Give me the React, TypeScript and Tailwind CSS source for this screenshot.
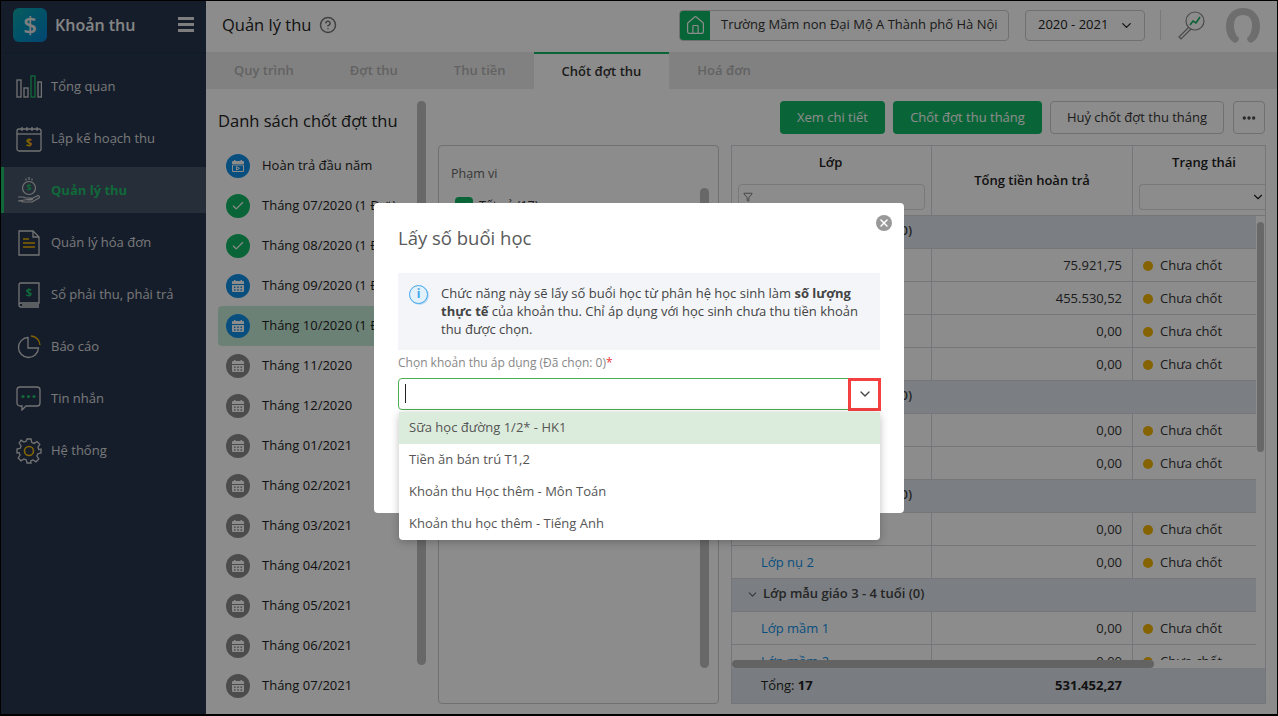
import { Check, ChevronDown, CircleHelp, Ellipsis, Filter, House, X } from "lucide-react";

const FONT = "font-['Open_Sans','Noto_Sans',sans-serif]";

function IconChart() {
  return (
    <svg width="26" height="24" viewBox="0 0 26 24" fill="none" stroke="#d2d2d2" strokeWidth="1.3">
      <rect x="1" y="5" width="4" height="17" />
      <rect x="8" y="13" width="4" height="9" />
      <rect x="15" y="1" width="4" height="21" stroke="#1fbf6a" />
      <rect x="22" y="7" width="3.4" height="15" />
    </svg>
  );
}
function IconPlan() {
  return (
    <svg width="26" height="26" viewBox="0 0 26 26" fill="none" stroke="#d2d2d2" strokeWidth="1.3">
      <rect x="1" y="3" width="24" height="22" rx="2" />
      <path d="M1 8h24" />
      <path d="M6 1v4M11 1v4M16 1v4M21 1v4" />
      <text x="13" y="20" textAnchor="middle" fontSize="11" fontWeight="700" fill="#f0b400" stroke="none">$</text>
    </svg>
  );
}
function IconHand() {
  return (
    <svg width="24" height="28" viewBox="0 0 24 28" fill="none" stroke="#d2d2d2" strokeWidth="1.2">
      <circle cx="12" cy="11" r="6.5" />
      <text x="12" y="14" textAnchor="middle" fontSize="9" fontWeight="700" fill="#1fbf6a" stroke="none">$</text>
      <path d="M12 0v3M9 1.5v2M15 1.5v2" />
      <path d="M1 20h5l3 1h5c2 0 2 2 0 2h-4M14 22l6-3c2-1 3 1 2 2l-7 4H6l-2-1H1z" />
    </svg>
  );
}
function IconInvoice() {
  return (
    <svg width="22" height="26" viewBox="0 0 22 26" fill="none" stroke="#d2d2d2" strokeWidth="1.3">
      <path d="M1 1h14l6 6v18H1z" />
      <path d="M15 1v6h6" />
      <path d="M5 9h6M5 13h12M5 17h12" stroke="#f0b400" />
    </svg>
  );
}
function IconBook() {
  return (
    <svg width="22" height="26" viewBox="0 0 22 26" fill="none" stroke="#d2d2d2" strokeWidth="1.3">
      <path d="M3 1h18v20H3a2 2 0 0 0 0 4h18M1 23V3a2 2 0 0 1 2-2M4 23h17" />
      <text x="11" y="14" textAnchor="middle" fontSize="11" fontWeight="700" fill="#1fbf6a" stroke="none">$</text>
    </svg>
  );
}
function IconPie() {
  return (
    <svg width="24" height="24" viewBox="0 0 24 24" fill="none" stroke="#d2d2d2" strokeWidth="1.3">
      <path d="M11 2.5a10 10 0 1 0 10.5 10.5H11z" />
      <path d="M14 1a9.5 9.5 0 0 1 9 9" stroke="#f0b400" />
    </svg>
  );
}
function IconChat() {
  return (
    <svg width="25" height="25" viewBox="0 0 25 25" fill="none" stroke="#d2d2d2" strokeWidth="1.3">
      <path d="M4 1h17a3 3 0 0 1 3 3v13a3 3 0 0 1-3 3H10l-4 4v-4H4a3 3 0 0 1-3-3V4a3 3 0 0 1 3-3z" />
      <circle cx="7" cy="10.5" r="1.6" fill="#1fbf6a" stroke="none" />
      <circle cx="12.5" cy="10.5" r="1.6" fill="#1fbf6a" stroke="none" />
      <circle cx="18" cy="10.5" r="1.6" fill="#1fbf6a" stroke="none" />
    </svg>
  );
}
function IconGear() {
  return (
    <svg width="26" height="26" viewBox="0 0 26 26" fill="none" stroke="#d2d2d2" strokeWidth="1.3">
      <path d="M11 1h4l.7 3.4 2.3 1 3-1.900 2.800 2.800-1.900 3 1 2.300L25 11v4l-3.100.7-1 2.300 1.900 3-2.800 2.800-3-1.900-2.300 1L15 25h-4l-.7-3.100-2.300-1-3 1.900-2.800-2.800 1.900-3-1-2.300L1 15v-4l3.100-.7 1-2.300-1.900-3L5 2.200l3 1.900 2.300-1z" />
      <circle cx="13" cy="13" r="4.500" stroke="#f0b400" strokeWidth="1.6" />
    </svg>
  );
}

const NAV = [
  { label: "Tổng quan", icon: <IconChart /> },
  { label: "Lập kế hoạch thu", icon: <IconPlan /> },
  { label: "Quản lý thu", icon: <IconHand />, active: true },
  { label: "Quản lý hóa đơn", icon: <IconInvoice /> },
  { label: "Sổ phải thu, phải trả", icon: <IconBook /> },
  { label: "Báo cáo", icon: <IconPie /> },
  { label: "Tin nhắn", icon: <IconChat /> },
  { label: "Hệ thống", icon: <IconGear /> },
];

function Sidebar() {
  return (
    <aside className="flex w-[205px] shrink-0 flex-col bg-[#27364f]">
      <div className="flex h-[51px] items-center pb-[4px] pl-3 pr-3 shadow-sm">
        <div className="flex h-[34px] w-[34px] items-center justify-center rounded-md bg-gradient-to-br from-[#12a8a8] to-[#0a7fd0] text-[24px] font-semibold leading-none text-[#e8e8e8]">
          $
        </div>
        <span className="ml-2 flex-1 text-[16px] font-semibold text-[#f2f2f2]">Khoản thu</span>
        <div className="flex w-4 flex-col gap-[3px]">
          <span className="h-[3px] bg-[#e6e6e6]" />
          <span className="h-[3px] bg-[#e6e6e6]" />
          <span className="h-[3px] bg-[#e6e6e6]" />
        </div>
      </div>
      <nav className="flex flex-col pt-[8px]">
        {NAV.map((n) => (
          <div
            key={n.label}
            className={`my-[3px] flex h-[46px] items-center border-l-[3px] pt-px text-[13px] ${
              n.active ? "border-[#1fbf6a] bg-[#455469] font-bold text-[#1fbf6a]" : "border-transparent text-[#dcdcdc]"
            }`}
          >
            <span className="flex w-[47px] shrink-0 justify-center pl-0.5">{n.icon}</span>
            {n.label}
          </div>
        ))}
      </nav>
    </aside>
  );
}

function Header() {
  return (
    <header className="flex h-[51px] shrink-0 items-center bg-white pb-[3px] pl-4 pr-[17px] shadow-sm">
      <h1 className="text-[16.5px] font-medium text-[#222]">Quản lý thu</h1>
      <CircleHelp size={18} className="ml-2 text-[#777]" />
      <div className="ml-auto flex h-[31px] w-[330px] items-stretch overflow-hidden rounded border border-[#ccc] text-[13px] text-[#333]">
        <div className="flex w-[30px] items-center justify-center bg-[#0fb864] text-white">
          <House size={21} strokeWidth={1.4} />
        </div>
        <div className="flex flex-1 items-center pl-[11px]">Trường Mầm non Đại Mộ A Thành phố Hà Nội</div>
      </div>
      <div className="ml-4 flex h-[31px] w-[120px] items-center justify-between rounded border border-[#ccc] pl-3 pr-2.5 text-[13px] text-[#222]">
        2020 - 2021
        <ChevronDown size={15} />
      </div>
      <div className="ml-[15px] h-[30px] w-px bg-[#ddd]" />
      <svg className="ml-[15px]" width="30" height="30" viewBox="0 0 30 30" fill="none" stroke="#888" strokeWidth="1.2">
        <circle cx="19" cy="11" r="9" />
        <path d="M13 17 3 27l2 2 10-10" />
        <path d="M14 15l3-4 3 2 4-6" stroke="#18b060" strokeWidth="1.6" />
      </svg>
      <svg className="ml-5" width="34" height="36" viewBox="0 0 34 36">
        <path d="M9 36C3 33 0 27 0 19 0 8 7 1 17 1s17 7 17 18c0 8-3 14-9 17-3-1-4-3-4-5 3-2 5-7 5-13 0-6-3-10-9-10S8 12 8 18c0 6 2 11 5 13 0 2-1 4-4 5z" fill="#c9c9c9" />
      </svg>
    </header>
  );
}

function Tabs() {
  const tabs = ["Quy trình", "Đợt thu", "Thu tiền", "Chốt đợt thu", "Hoá đơn"];
  return (
    <div className="flex h-[37px] shrink-0 bg-[#ececec] text-[13px] font-semibold">
      {tabs.map((t) => (
        <div
          key={t}
          className={`flex items-center px-7 ${
            t === "Chốt đợt thu" ? "border-t-2 border-[#12b866] bg-white text-[#333]" : "text-[#b3b3b3]"
          }`}
        >
          {t}
        </div>
      ))}
    </div>
  );
}

function CalendarGlyph({ plan }: { plan?: boolean }) {
  return (
    <svg width="14" height="14" viewBox="0 0 14 14">
      <path d="M1 3a1 1 0 0 1 1-1h1V1h1.500v1h5V1H11v1h1a1 1 0 0 1 1 1v2H1z" fill="#fff" />
      {plan ? (
        <path d="M1.500 6h11v6.500h-11z M5.500 7.500v3.500l3-1.700z" fill="none" stroke="#fff" strokeWidth="1" />
      ) : (
        <path d="M1 6h12v6a1 1 0 0 1-1 1H2a1 1 0 0 1-1-1z M3 7.500v1.500h1.500V7.500z M6.250 7.500v1.500h1.500V7.500z M9.500 7.500v1.500H11V7.500z M3 10.300v1.400h1.500v-1.400z M6.250 10.300v1.400h1.500v-1.400z M9.500 10.300v1.400H11v-1.400z" fill="#fff" fillRule="evenodd" />
      )}
    </svg>
  );
}

type Kind = "plan" | "done" | "open" | "idle";
const PERIODS: { label: string; kind: Kind; active?: boolean }[] = [
  { label: "Hoàn trả đầu năm", kind: "plan" },
  { label: "Tháng 07/2020 (1 Đợt)", kind: "done" },
  { label: "Tháng 08/2020 (1 Đợt)", kind: "done" },
  { label: "Tháng 09/2020 (1 Đợt)", kind: "open" },
  { label: "Tháng 10/2020 (1 Đợt)", kind: "open", active: true },
  { label: "Tháng 11/2020", kind: "idle" },
  { label: "Tháng 12/2020", kind: "idle" },
  { label: "Tháng 01/2021", kind: "idle" },
  { label: "Tháng 02/2021", kind: "idle" },
  { label: "Tháng 03/2021", kind: "idle" },
  { label: "Tháng 04/2021", kind: "idle" },
  { label: "Tháng 05/2021", kind: "idle" },
  { label: "Tháng 06/2021", kind: "idle" },
  { label: "Tháng 07/2021", kind: "idle" },
];

function PeriodList() {
  return (
    <div className="flex w-[220px] shrink-0 pt-[12px]">
      <div className="flex w-[211px] shrink-0 flex-col pl-3">
        <h2 className="mb-[13px] mt-[8px] whitespace-nowrap text-[16.5px] font-medium leading-[24px] text-[#222]">
          Danh sách chốt đợt thu
        </h2>
        {PERIODS.map((p) => (
          <div
            key={p.label}
            className={`flex h-[40px] shrink-0 items-center gap-3 whitespace-nowrap rounded-l pl-2 text-[13px] text-[#222] ${
              p.active ? "bg-[#c5ecd7]" : ""
            }`}
          >
            <span
              className={`flex h-6 w-6 shrink-0 items-center justify-center rounded-full text-white ${
                p.kind === "done" ? "bg-[#12b866]" : p.kind === "idle" ? "bg-[#8a8a8a]" : "bg-[#0f8fe6]"
              }`}
            >
              {p.kind === "done" ? <Check size={14} /> : <CalendarGlyph plan={p.kind === "plan"} />}
            </span>
            <span className="overflow-hidden">{p.label}</span>
          </div>
        ))}
      </div>
      <div className="h-[564px] w-[9px] shrink-0 rounded-full bg-[#bdbdbd]" />
    </div>
  );
}

function Toolbar() {
  return (
    <div className="mr-px flex h-[33px] shrink-0 justify-end gap-2 text-[13px]">
      <button className="w-[105px] rounded bg-[#12b866] text-white">Xem chi tiết</button>
      <button className="w-[149px] rounded bg-[#12b866] text-white">Chốt đợt thu tháng</button>
      <button className="w-[174px] rounded border border-[#ccc] bg-white text-[#333]">Huỷ chốt đợt thu tháng</button>
      <button className="ml-px flex w-[32px] items-center justify-center rounded border border-[#ccc] bg-white text-[#444]">
        <Ellipsis size={16} strokeWidth={3} />
      </button>
    </div>
  );
}

function ScopePanel() {
  return (
    <div className="flex h-[559px] w-[281px] shrink-0 rounded border border-[#ccc] pl-3 pt-[19px]">
      <div className="flex-1 text-[12.5px]">
        <div className="text-[#666]">Phạm vi</div>
        <div className="mt-[13px] flex items-center gap-1.5 pl-1 text-[#333]">
          <span className="flex h-[18px] w-[18px] items-center justify-center rounded bg-[#12b866] text-white">
            <Check size={12} />
          </span>
          Tất cả (17)
        </div>
      </div>
      <div className="mr-[9px] mt-[23px] h-[480px] w-[9px] rounded-full bg-[#bdbdbd]" />
    </div>
  );
}

type Row = { group: string } | { name: string; amount: string };
const ROWS: Row[] = [
  { group: "Lớp nhà trẻ 1 - 2 tuổi (0)" },
  { name: "Lớp thỏ 1", amount: "75.921,75" },
  { name: "Lớp thỏ 2", amount: "455.530,52" },
  { name: "Lớp thỏ 3", amount: "0,00" },
  { name: "Lớp thỏ 4", amount: "0,00" },
  { group: "Lớp nhà trẻ 2 - 3 tuổi (0)" },
  { name: "Lớp chồi 1", amount: "0,00" },
  { name: "Lớp chồi 2", amount: "0,00" },
  { group: "Lớp nhà trẻ 2 - 3 tuổi (0)" },
  { name: "Lớp nụ 1", amount: "0,00" },
  { name: "Lớp nụ 2", amount: "0,00" },
  { group: "Lớp mẫu giáo 3 - 4 tuổi (0)" },
  { name: "Lớp mầm 1", amount: "0,00" },
  { name: "Lớp mầm 2", amount: "0,00" },
];

function ClassTable() {
  return (
    <div className="flex h-[559px] w-[535px] shrink-0 flex-col overflow-hidden border border-[#d4d8de] text-[13px]">
      <div className="flex h-[70px] shrink-0 border-b border-[#d4d8de] bg-white font-semibold text-[#222]">
        <div className="flex w-[200px] shrink-0 flex-col items-center border-r border-[#d4d8de] px-1.5 pt-[7px]">
          <span className="pr-0.5">Lớp</span>
          <div className="mt-[11px] flex h-[26px] w-full items-center rounded border border-[#ddd] pl-1">
            <Filter size={10} className="text-[#666]" />
          </div>
        </div>
        <div className="flex w-[201px] shrink-0 items-center justify-center border-r border-[#d4d8de]">Tổng tiền hoàn trả</div>
        <div className="flex flex-1 flex-col pl-1.5 pt-[7px]">
          <span className="pl-[4px] text-center">Trạng thái</span>
          <div className="mt-[11px] flex h-[26px] w-full items-center justify-end rounded-l border border-r-0 border-[#ddd]">
            <ChevronDown size={14} />
          </div>
        </div>
      </div>
      <div className="flex min-h-0 flex-1">
        <div className="flex min-w-0 flex-1 flex-col">
          <div className="min-h-0 flex-1 overflow-hidden">
            {ROWS.map((r, i) =>
              "group" in r ? (
                <div key={i} className="flex h-[33px] items-center border-b border-[#d4d8de] bg-[#e0e6ee] pb-[2px] pl-[14px] font-semibold text-[#444]">
                  <ChevronDown size={13} className="mr-[4px] text-[#666]" />
                  {r.group}
                </div>
              ) : (
                <div key={i} className="flex h-[33px] border-b border-[#d4d8de] text-[#333]">
                  <div className="flex w-[200px] shrink-0 items-center border-r border-[#d4d8de] pl-[29px] pt-[1px] text-[#0f8fe6]">{r.name}</div>
                  <div className="flex w-[201px] shrink-0 items-center justify-end border-r border-[#d4d8de] pr-[10px] pt-[1px]">{r.amount}</div>
                  <div className="flex flex-1 items-center gap-[7px] pl-[10px] pt-[1px]">
                    <span className="h-[10px] w-[10px] rounded-full bg-[#f0b400]" />
                    Chưa chốt
                  </div>
                </div>
              ),
            )}
          </div>
          <div className="h-[8px] shrink-0">
            <div className="h-full w-[422px] rounded-full bg-[#b5b5b5]" />
          </div>
        </div>
        <div className="w-[9px] shrink-0 pr-[1px] pt-[6px]">
          <div className="ml-px h-[230px] w-[7px] rounded-full bg-[#bdbdbd]" />
        </div>
      </div>
      <div className="flex h-[35px] shrink-0 items-center bg-[#dde2ea] text-[#222]">
        <div className="w-[200px] shrink-0 pl-[29px]">
          Tổng: <b>17</b>
        </div>
        <div className="w-[201px] shrink-0 pr-[11px] text-right font-bold">531.452,27</div>
      </div>
    </div>
  );
}

function Modal() {
  return (
    <div className="relative h-[310px] w-[530px] rounded bg-white px-6 pt-[22px]">
      <span className="absolute right-3 top-3 flex h-4 w-4 items-center justify-center rounded-full bg-[#999] text-white">
        <X size={12} strokeWidth={3} />
      </span>
      <h3 className="text-[18.5px] font-medium leading-[26px] text-[#5a5a5a]">Lấy số buổi học</h3>
      <div className="mt-[22px] flex h-[77px] gap-[13px] bg-[#f3f5f9] pl-[11px] pr-3 pt-[11px] text-[13px] leading-[18px] text-[#444]">
        <span className="mt-[1px] flex h-[19px] w-[19px] shrink-0 items-center justify-center rounded-full border-[1.5px] border-[#3da5ee] bg-[#e2f1fc] text-[12px] font-bold leading-none text-[#3da5ee] shadow-[1px_1px_0_#bcdcf5]">
          i
        </span>
        <p>
          Chức năng này sẽ lấy số buổi học từ phân hệ học sinh làm <b>số lượng thực tế</b> của khoản thu. Chỉ áp dụng với học sinh chưa thu tiền khoản thu được chọn.
        </p>
      </div>
      <div className="mt-[4px] text-[12px] leading-[18px] text-[#888]">
        Chọn khoản thu áp dụng (Đã chọn: 0)<span className="text-[#f03030]">*</span>
      </div>
      <div className="mt-[6px] flex h-[32px] w-[482px] items-center rounded border border-[#4caf50] pl-[6px]">
        <span className="h-[19px] w-px bg-[#222]" />
      </div>
      <div className="absolute left-[474px] top-[175px] flex h-[33px] w-[33px] items-center justify-center border-[3px] border-[#f44040] text-[#444]">
        <ChevronDown size={16} />
      </div>
      <ul className="absolute left-[25px] top-[208px] mt-px w-[481px] rounded bg-white text-[13px] text-[#555] shadow-[0_2px_8px_rgba(0,0,0,0.25)]">
        <li className="flex h-[32px] items-center bg-[#dcecdc] pl-[10px]">Sữa học đường 1/2* - HK1</li>
        <li className="flex h-[32px] items-center pl-[10px]">Tiền ăn bán trú T1,2</li>
        <li className="flex h-[32px] items-center pl-[10px]">Khoản thu Học thêm - Môn Toán</li>
        <li className="flex h-[32px] items-center pl-[10px]">Khoản thu học thêm - Tiếng Anh</li>
      </ul>
    </div>
  );
}

export default function App() {
  return (
    <div className={`relative flex h-[716px] w-[1278px] overflow-hidden border-b-2 border-l border-r border-t border-black bg-white ${FONT}`}>
      <Sidebar />
      <main className="flex min-w-0 flex-1 flex-col">
        <Header />
        <Tabs />
        <div className="flex flex-1 overflow-hidden">
          <PeriodList />
          <div className="flex flex-1 flex-col gap-[11px] pl-[12px] pr-[11px] pt-[12px]">
            <Toolbar />
            <div className="flex gap-3">
              <ScopePanel />
              <ClassTable />
            </div>
          </div>
        </div>
      </main>
      <div className="absolute inset-0 flex items-center justify-center bg-black/45">
        <Modal />
      </div>
    </div>
  );
}
